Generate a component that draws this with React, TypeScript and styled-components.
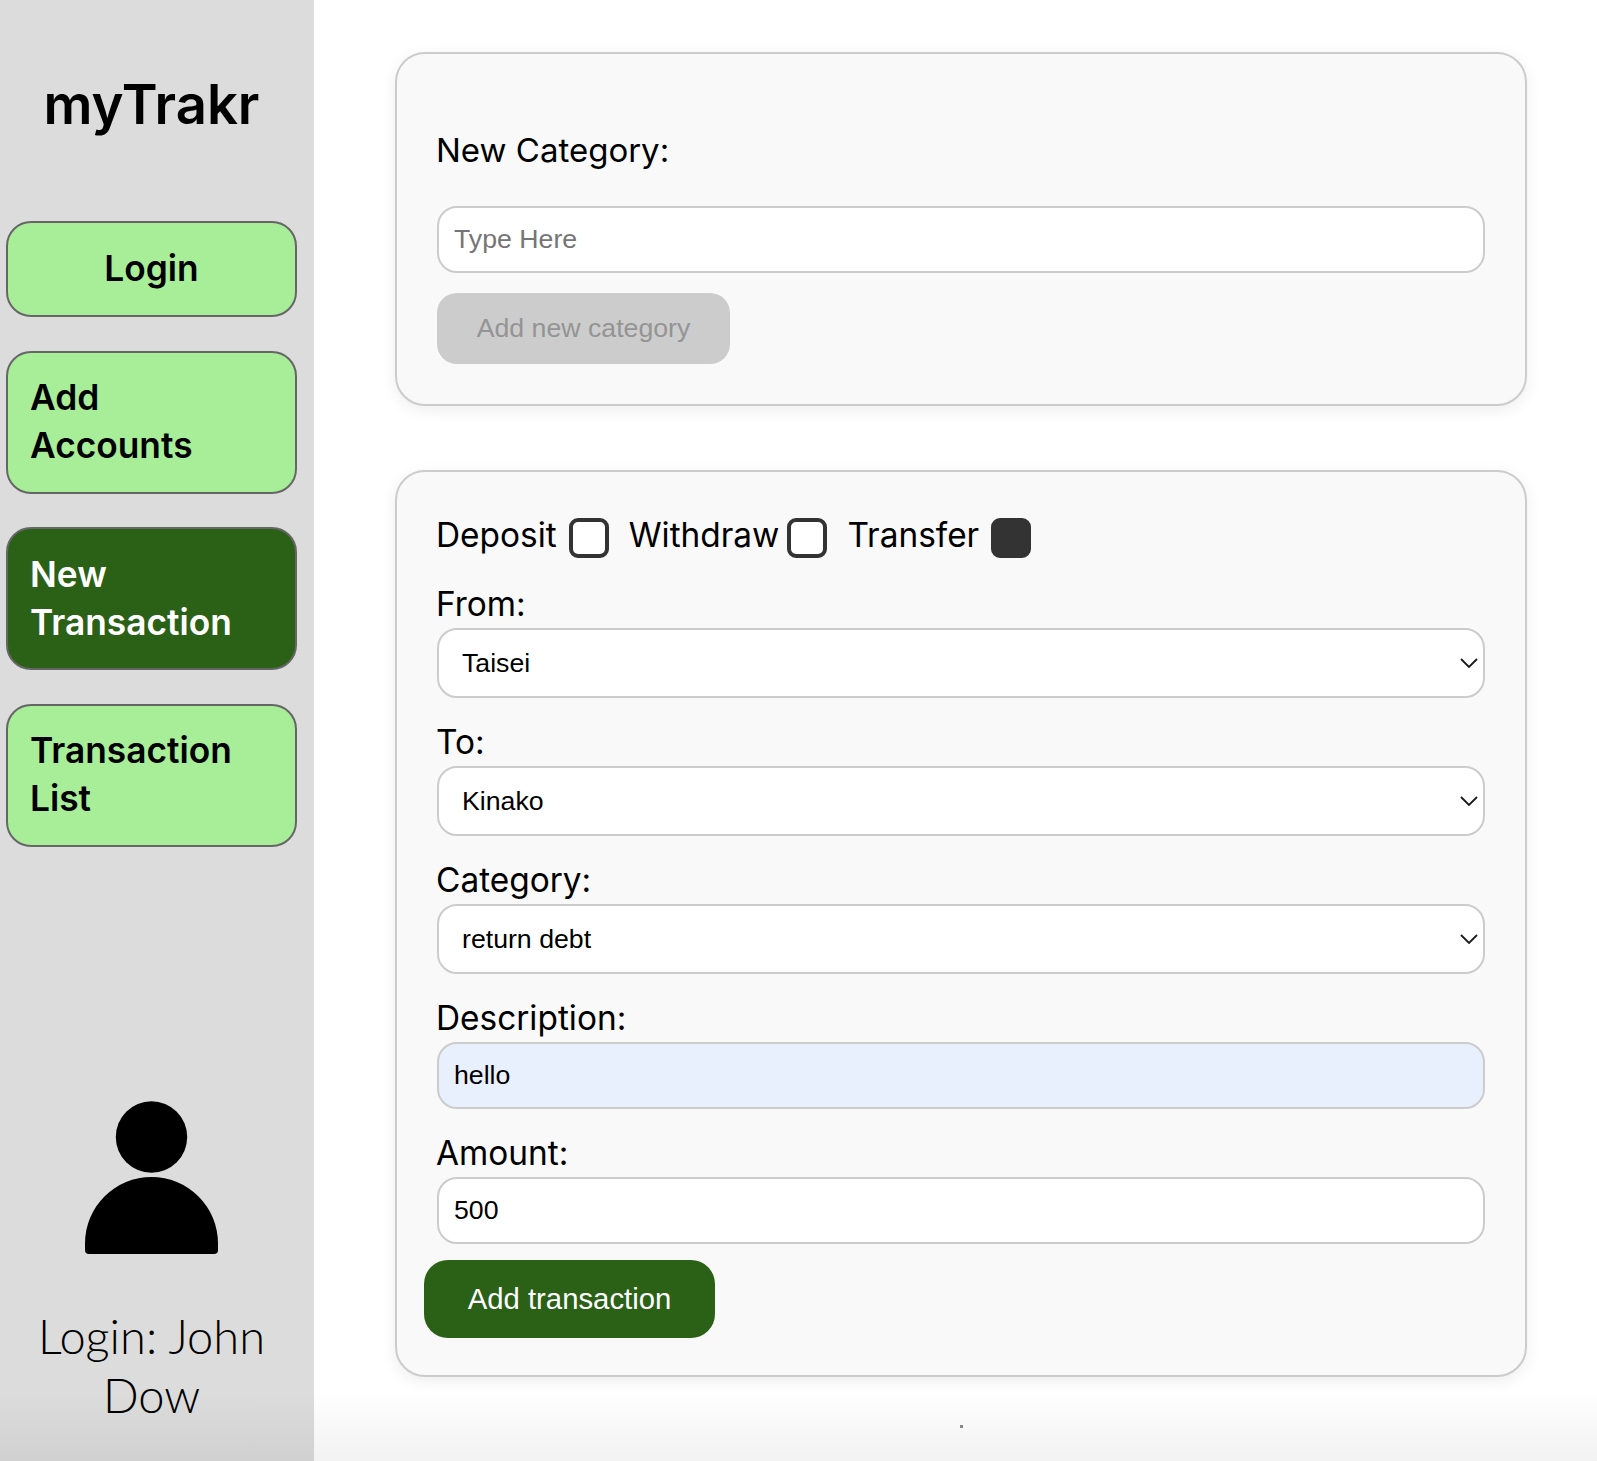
import React from "react";
import styled, { createGlobalStyle } from "styled-components";

const Global = createGlobalStyle`
  html, body { margin: 0; padding: 0; background: #fff; }
  * { box-sizing: border-box; }
  body { font-family: "Liberation Sans", Arial, sans-serif; }
`;

const Page = styled.div`
  position: relative;
  display: flex;
  width: 1597px;
  height: 1461px;
  overflow: hidden;
  &::after {
    content: "";
    position: absolute;
    left: 0;
    right: 0;
    bottom: 0;
    height: 70px;
    pointer-events: none;
    background: linear-gradient(to bottom, rgba(0, 0, 0, 0), rgba(0, 0, 0, 0.05));
  }
`;

const Sidebar = styled.aside`
  width: 314px;
  flex: none;
  background: #dcdcdc;
  display: flex;
  flex-direction: column;
  padding: 0 17px 0 6px;
`;

const Logo = styled.h1`
  margin: 0;
  height: 221px;
  padding-top: 71px;
  font: 600 54.4px/66px Inter, sans-serif;
  text-align: center;
  color: #000;
`;

const Nav = styled.nav`
  display: flex;
  flex-direction: column;
  gap: 33.5px;
`;

const NavItem = styled.a<{ $active?: boolean; $center?: boolean }>`
  display: block;
  padding: ${(p) => (p.$center ? "22px" : "21.5px 40px 21.5px 22px")};
  border: 2px solid #666;
  border-radius: 25px;
  background: ${(p) => (p.$active ? "#2b6117" : "#a8ee98")};
  color: ${(p) => (p.$active ? "#fff" : "#000")};
  text-align: ${(p) => (p.$center ? "center" : "left")};
  font: 600 35.3px/48px Inter, sans-serif;
`;

const Profile = styled.div`
  margin-top: auto;
  padding-bottom: 36px;
  display: flex;
  flex-direction: column;
  align-items: center;
  gap: 53px;
`;

const LoginText = styled.div`
  font: 300 47px/59px Lato, sans-serif;
  text-align: center;
  color: #000;
`;

const Main = styled.main`
  flex: 1;
  padding: 52px 70px 0 81px;
  display: flex;
  flex-direction: column;
  gap: 64px;
`;

const Card = styled.section<{ $top: number; $bottom: number }>`
  display: flex;
  flex-direction: column;
  padding: ${(p) => p.$top}px 39px ${(p) => p.$bottom}px;
  background: #f9f9f9;
  border: 2px solid #ccc;
  border-radius: 30px;
  box-shadow: 0 4px 16px rgba(0, 0, 0, 0.07);
`;

const Heading = styled.label`
  font: 400 33px/44px Inter, sans-serif;
  color: #000;
  margin-bottom: 34px;
`;

const FieldLabel = styled.label`
  display: block;
  margin: 22px 0 2px;
  font: 400 33.4px/44px Inter, sans-serif;
  color: #000;
  height: 44px;
`;

const TextInput = styled.input<{ $filled?: boolean }>`
  display: block;
  width: calc(100% - 2px);
  height: 67px;
  margin: 0 1px;
  padding: 0 15px;
  border: 2px solid #ccc;
  border-radius: 20px;
  background: ${(p) => (p.$filled ? "#e8f0fe" : "#fff")};
  font: 400 26.7px "Liberation Sans", Arial, sans-serif;
  color: #000;
  outline: none;
  &::placeholder { color: #757575; opacity: 1; }
`;

const SelectWrap = styled.div`
  position: relative;
  height: 70px;
  margin: 0 1px;
  svg {
    position: absolute;
    right: 7px;
    top: 29px;
    pointer-events: none;
  }
`;

const Select = styled.select`
  display: block;
  width: 100%;
  height: 100%;
  appearance: none;
  padding: 0 23px;
  border: 2px solid #ccc;
  border-radius: 20px;
  background: #fff;
  font: 400 26.7px "Liberation Sans", Arial, sans-serif;
  color: #000;
  outline: none;
`;

const DisabledButton = styled.button`
  align-self: flex-start;
  width: 293px;
  height: 71px;
  margin: 20px 0 0 1px;
  border: none;
  border-radius: 20px;
  background: #ccc;
  color: #949494;
  font: 400 26.7px "Liberation Sans", Arial, sans-serif;
`;

const SubmitButton = styled.button`
  align-self: flex-start;
  width: 291px;
  height: 78px;
  margin: 16px 0 0 -12px;
  border: none;
  border-radius: 24px;
  background: #2b6117;
  color: #fff;
  font: 400 29.3px "Liberation Sans", Arial, sans-serif;
`;

const TypeRow = styled.div`
  display: flex;
  align-items: center;
  height: 40px;
  margin: 46px 0 2px;
  font: 400 33.4px/44px Inter, sans-serif;
  color: #000;
`;

const TypeLabel = styled.span<{ $gap: number }>`
  margin-right: ${(p) => p.$gap}px;
  margin-bottom: 6px;
`;

const Box = styled.span<{ $checked?: boolean }>`
  width: 40px;
  height: 40px;
  margin-right: 20px;
  border: 4px solid #333;
  border-radius: 9px;
  background: ${(p) => (p.$checked ? "#333" : "#fff")};
`;

const Speck = styled.div`
  width: 3px;
  height: 3px;
  margin: -16px auto 0;
  background: #8a8a8a;
`;

const Chevron = () => (
  <svg width="18" height="12" viewBox="0 0 18 12" fill="none">
    <path d="M1 2 L9 10 L17 2" stroke="#1a1a1a" strokeWidth="1.8" />
  </svg>
);

const Person = () => (
  <svg width="133" height="153" viewBox="0 0 133 153">
    <circle cx="66.5" cy="36" r="35.7" fill="#000" />
    <path d="M0 142.5A66.5 66.5 0 0 1 133 142.5V149a4 4 0 0 1-4 4H4a4 4 0 0 1-4-4Z" fill="#000" />
  </svg>
);

export default function App() {
  return (
    <>
      <Global />
      <Page>
        <Sidebar>
          <Logo>myTrakr</Logo>
          <Nav>
            <NavItem $center>Login</NavItem>
            <NavItem>Add Accounts</NavItem>
            <NavItem $active>New Transaction</NavItem>
            <NavItem>Transaction List</NavItem>
          </Nav>
          <Profile>
            <Person />
            <LoginText>Login: John Dow</LoginText>
          </Profile>
        </Sidebar>
        <Main>
          <Card $top={74} $bottom={40}>
            <Heading>New Category:</Heading>
            <TextInput placeholder="Type Here" readOnly />
            <DisabledButton disabled>Add new category</DisabledButton>
          </Card>
          <Card $top={0} $bottom={37}>
            <TypeRow>
              <TypeLabel $gap={12}>Deposit</TypeLabel>
              <Box />
              <TypeLabel $gap={8}>Withdraw</TypeLabel>
              <Box />
              <TypeLabel $gap={12}>Transfer</TypeLabel>
              <Box $checked />
            </TypeRow>
            <FieldLabel>From:</FieldLabel>
            <SelectWrap>
              <Select defaultValue="Taisei">
                <option>Taisei</option>
              </Select>
              <Chevron />
            </SelectWrap>
            <FieldLabel>To:</FieldLabel>
            <SelectWrap>
              <Select defaultValue="Kinako">
                <option>Kinako</option>
              </Select>
              <Chevron />
            </SelectWrap>
            <FieldLabel>Category:</FieldLabel>
            <SelectWrap>
              <Select defaultValue="return debt">
                <option>return debt</option>
              </Select>
              <Chevron />
            </SelectWrap>
            <FieldLabel>Description:</FieldLabel>
            <TextInput $filled defaultValue="hello" />
            <FieldLabel>Amount:</FieldLabel>
            <TextInput defaultValue="500" />
            <SubmitButton>Add transaction</SubmitButton>
          </Card>
          <Speck />
        </Main>
      </Page>
    </>
  );
}
